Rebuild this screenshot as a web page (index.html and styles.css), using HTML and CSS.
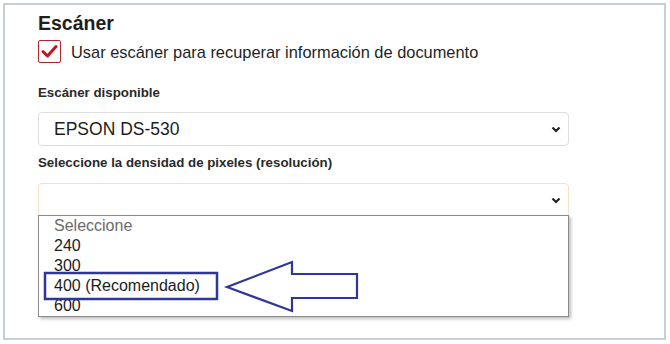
FILE: index.html
```html
<!DOCTYPE html>
<html lang="es">

<head>
    <meta charset="UTF-8">
    <meta name="viewport" content="width=device-width, initial-scale=1.0">
    <title>Escáner</title>
    <link rel="stylesheet" href="styles.css">
</head>

<body>
    <div class="frame">
        <h2 class="title">Escáner</h2>

        <label class="check-row">
            <span class="checkbox">
                <svg width="21" height="21" viewBox="0 0 21 21">
                    <path d="M4 10.5 L8.5 15 L17 5.5" fill="none" stroke="#c0161f" stroke-width="3"
                        stroke-linecap="round" stroke-linejoin="round" />
                </svg>
            </span>
            <span class="check-text">Usar escáner para recuperar información de documento</span>
        </label>

        <div class="field-label first">Escáner disponible</div>
        <div class="select">
            <span class="select-value">EPSON DS-530</span>
            <svg class="chevron" width="10" height="7" viewBox="0 0 10 7">
                <path d="M1.5 1.5 L5 5 L8.5 1.5" fill="none" stroke="#222" stroke-width="2.2" />
            </svg>
        </div>

        <div class="field-label">Seleccione la densidad de pixeles (resolución)</div>
        <div class="select-wrap">
            <div class="select focused">
                <span class="select-value"></span>
                <svg class="chevron" width="10" height="7" viewBox="0 0 10 7">
                    <path d="M1.5 1.5 L5 5 L8.5 1.5" fill="none" stroke="#222" stroke-width="2.2" />
                </svg>
            </div>
            <ul class="options">
                <li class="placeholder">Seleccione</li>
                <li>240</li>
                <li>300</li>
                <li>400 (Recomendado)</li>
                <li>600</li>
            </ul>
        </div>
    </div>

    <!-- anotación: recuadro y flecha -->
    <svg class="note" width="670" height="344" viewBox="0 0 670 344">
        <rect x="45" y="273" width="172" height="26" fill="none" stroke="#2f3796" stroke-width="2.5" />
        <polygon points="227,287 292,262 292,274 357,274 357,298 292,298 292,311" fill="none" stroke="#2f3796"
            stroke-width="2.2" stroke-linejoin="miter" />
    </svg>
</body>

</html>
```

FILE: styles.css
```css
body {
    margin: 0;
    background-color: #fff;
    font-family: "Liberation Sans", Arial, sans-serif;
    color: #222;
    position: relative;
}

.frame {
    box-sizing: border-box;
    width: 663px;
    height: 337px;
    margin: 3px;
    border: 2px solid #c4cfd6;
    padding: 6px 0 0 33px;
    display: flex;
    flex-direction: column;
    align-items: flex-start;
}

.title {
    margin: 0;
    font-size: 19.5px;
    line-height: 24px;
    font-weight: bold;
    color: #1e1e1e;
}

.check-row {
    margin-top: 5px;
    display: flex;
    align-items: center;
    gap: 10px;
}

.checkbox {
    box-sizing: border-box;
    width: 23px;
    height: 23px;
    border: 1.5px solid #b3262c;
    border-radius: 2px;
    display: flex;
    align-items: center;
    justify-content: center;
}

.check-text {
    font-size: 16.4px;
    color: #1f1f1f;
    padding-top: 1px;
}

.field-label {
    margin-top: 8px;
    font-size: 13.3px;
    line-height: 18px;
    font-weight: bold;
    color: #2a2a2a;
}

.field-label.first {
    margin-top: 21px;
}

.select {
    box-sizing: border-box;
    width: 531px;
    height: 34px;
    margin-top: 10px;
    border: 1px solid #dedede;
    border-radius: 4px;
    padding: 0 7px 0 15px;
    display: flex;
    align-items: center;
    justify-content: space-between;
    background-color: #fff;
}

.select-value {
    font-size: 17.5px;
    color: #1c1c1c;
}

.select.focused {
    border-color: #f3e2c4;
    margin-top: 0;
}

.select-wrap {
    margin-top: 11px;
    position: relative;
}

.options {
    position: absolute;
    top: 32px;
    left: 0;
    box-sizing: border-box;
    width: 531px;
    margin: 0;
    padding: 0;
    list-style: none;
    background-color: #fff;
    border: 1px solid #8a8a8a;
    box-shadow: 2px 2px 3px rgba(0, 0, 0, 0.25);
}

.options li {
    height: 20px;
    line-height: 20px;
    padding-left: 15px;
    font-size: 16px;
    color: #1c1c1c;
}

.options .placeholder {
    color: #6b6b6b;
}

.note {
    position: absolute;
    top: 0;
    left: 0;
}
```
